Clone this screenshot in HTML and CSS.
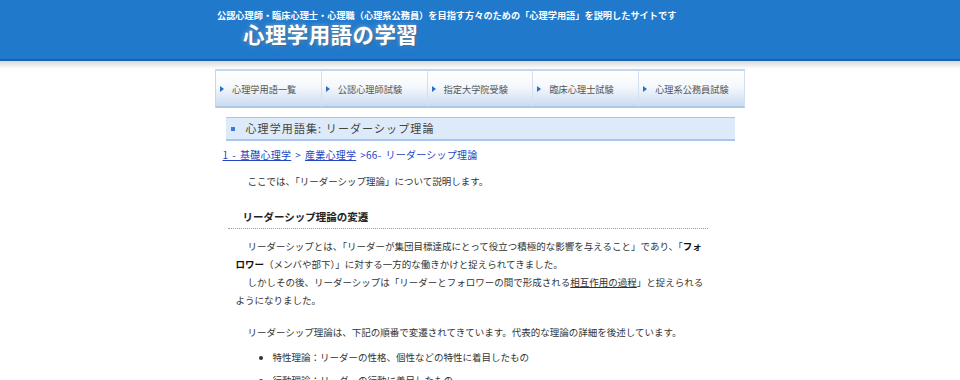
FILE: index.html
```html
<!DOCTYPE html>
<html lang="ja">
<head>
    <meta charset="UTF-8">
    <title>心理学用語の学習</title>
    <link rel="stylesheet" href="styles.css">
</head>
<body>
    <header class="site-head">
        <div class="head-inner">
            <p class="tagline">公認心理師・臨床心理士・心理職（心理系公務員）を目指す方々のための「心理学用語」を説明したサイトです</p>
            <h1 class="logo">心理学用語の学習</h1>
        </div>
    </header>
    <div class="head-shadow"></div>

    <nav class="gnav">
        <ul>
            <li><a href="#">心理学用語一覧</a></li>
            <li><a href="#">公認心理師試験</a></li>
            <li><a href="#">指定大学院受験</a></li>
            <li><a href="#">臨床心理士試験</a></li>
            <li><a href="#">心理系公務員試験</a></li>
        </ul>
    </nav>

    <main class="main">
        <h2 class="page-title">心理学用語集: リーダーシップ理論</h2>
        <p class="crumb"><a href="#">1 - 基礎心理学</a> &gt; <a href="#">産業心理学</a> &gt;66- リーダーシップ理論</p>

        <div class="content">
            <p class="lead">ここでは、「リーダーシップ理論」について説明します。</p>

            <h3 class="sec-title">リーダーシップ理論の変遷</h3>
            <p class="txt first">リーダーシップとは、「リーダーが集団目標達成にとって役立つ積極的な影響を与えること」であり、「<b>フォロワー</b>（メンバや部下）」に対する一方的な働きかけと捉えられてきました。</p>
            <p class="txt">しかしその後、リーダーシップは「リーダーとフォロワーの間で形成される<u>相互作用の過程</u>」と捉えられるようになりました。</p>

            <p class="txt gap">リーダーシップ理論は、下記の順番で変遷されてきています。代表的な理論の詳細を後述しています。</p>
            <ul class="list">
                <li>特性理論：リーダーの性格、個性などの特性に着目したもの</li>
                <li>行動理論：リーダーの行動に着目したもの</li>
                <li>状況理論：リーダーシップの有効性は状況によって異なるとするもの</li>
            </ul>
        </div>
    </main>
</body>
</html>
```

FILE: styles.css
```css
body {
    margin: 0;
    background-color: #FFFFFF;
    color: #333333;
    font-family: "Noto Sans CJK JP", "Noto Sans", sans-serif;
}
.site-head {
    background-color: #2179CC;
    border-bottom: 2px solid #1A62B0;
    height: 59px;
}
.head-inner {
    width: 530px;
    margin: 0 auto;
}
.tagline {
    margin: 0;
    padding: 9px 0 0 2px;
    font-size: 9.2px;
    font-weight: bold;
    color: #FFFFFF;
    line-height: 12px;
}
.logo {
    margin: 0 0 0 28px;
    font-size: 21.5px;
    line-height: 26px;
    color: #FFFFFF;
    letter-spacing: 0.4px;
    text-shadow: 1px 1px 3px rgba(0, 0, 0, 0.35), 0 0 4px rgba(255, 255, 255, 0.5);
}
.head-shadow {
    height: 8px;
    background: linear-gradient(#D8D8D8, #FFFFFF);
}
.gnav {
    width: 530px;
    margin: 0 auto;
}
.gnav ul {
    list-style: none;
    margin: 0;
    padding: 0;
    display: flex;
    border-top: 2px solid #C3D7EE;
    border-left: 1px solid #C3D7EE;
}
.gnav li {
    flex: 1;
    border-right: 1px solid #D2E0F0;
    border-bottom: 2px solid #AFC8E8;
    background: linear-gradient(#FFFFFF 0%, #F5F8FC 45%, #C9DBF1 100%);
}
.gnav a {
    display: block;
    height: 35px;
    line-height: 36px;
    padding-left: 16px;
    position: relative;
    font-size: 9.2px;
    color: #555555;
    text-decoration: none;
}
.gnav a::before {
    content: "";
    position: absolute;
    left: 4px;
    top: 15px;
    border-left: 4px solid #2A6FC4;
    border-top: 3px solid transparent;
    border-bottom: 3px solid transparent;
}
.main {
    width: 509px;
    margin: 9px auto 0;
}
.page-title {
    margin: 0;
    height: 21px;
    line-height: 21px;
    padding-left: 20px;
    position: relative;
    background-color: #DCEAF9;
    border-top: 1px solid #A9C6EA;
    border-bottom: 2px solid #A9C6EA;
    font-size: 11px;
    font-weight: normal;
    letter-spacing: 1.1px;
    color: #444444;
}
.page-title::before {
    content: "";
    position: absolute;
    left: 5px;
    top: 9px;
    width: 4px;
    height: 4px;
    background-color: #3A7BD5;
}
.crumb {
    margin: 7px 0 0 -3px;
    font-size: 10px;
    line-height: 14px;
    letter-spacing: 0.25px;
    word-spacing: 1.5px;
    color: #2246C4;
}
.crumb a {
    color: #2246C4;
}
.content {
    padding: 0 24px 0 10px;
    font-size: 9.5px;
    line-height: 18px;
    color: #333333;
}
.lead {
    margin: 10px 0 0;
    text-indent: 12px;
}
.sec-title {
    margin: 19px 3px 0 -8px;
    padding: 0 0 3px 15px;
    font-size: 10.5px;
    line-height: 16px;
    color: #222222;
    border-bottom: 1px dotted #7B9FD0;
}
.txt {
    margin: 0;
    text-indent: 12px;
}
.txt.first {
    margin-top: 8px;
}
.txt b {
    color: #111111;
}
.txt.gap {
    margin-top: 14px;
}
.list {
    margin: 5px 0 0;
    padding-left: 37px;
    line-height: 23px;
}
```
